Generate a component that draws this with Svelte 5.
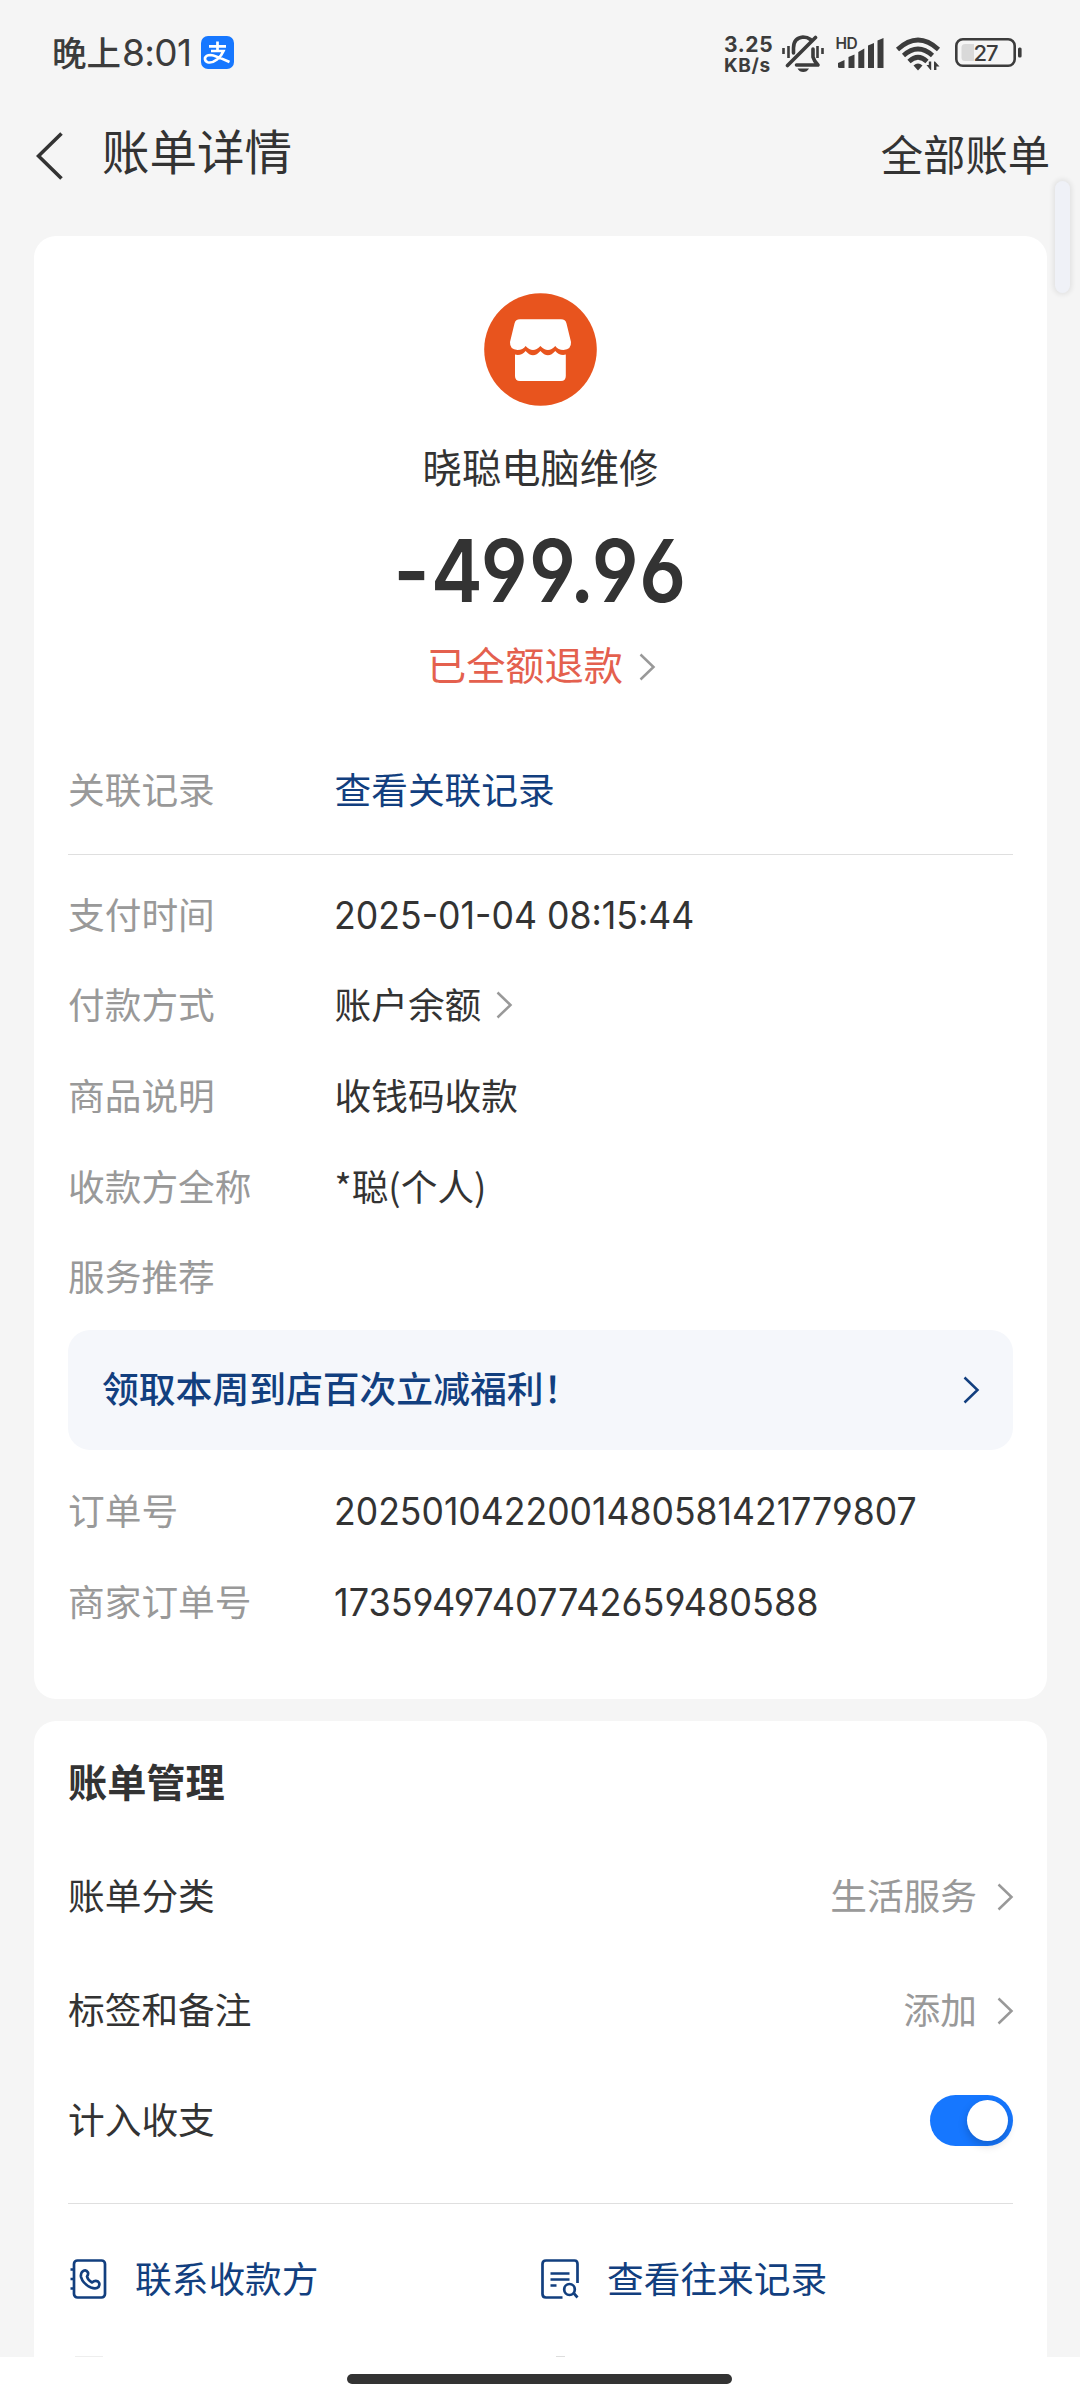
<script>
  const details = [
    { label: '支付时间', value: '2025-01-04 08:15:44', num: 'date' },
    { label: '付款方式', value: '账户余额', arrow: true },
    { label: '商品说明', value: '收钱码收款' },
    { label: '收款方全称', value: '*聪(个人)' },
    { label: '服务推荐', value: '' }
  ];
  const orders = [
    { label: '订单号', value: '2025010422001480581421779807', num: 'order' },
    { label: '商家订单号', value: '17359497407742659480588', num: 'merchant' }
  ];
  const settings = [
    { label: '账单分类', value: '生活服务' },
    { label: '标签和备注', value: '添加' }
  ];
</script>

{#snippet chevron(color)}
  <svg class="chevron {color}" width="17" height="28" viewBox="0 0 17 28">
    <path d="M1.500 1.500 14.500 14 1.500 26.500" />
  </svg>
{/snippet}

{#snippet row(item)}
  <div class="row">
    <span class="label">{item.label}</span>
    <span class="value {item.num ? 'num ' + item.num : ''}">{item.value}</span>
    {#if item.arrow}{@render chevron('gray')}{/if}
  </div>
{/snippet}

<div class="screen">
  <div class="page">
    <header class="status">
      <div class="clock">晚上<span class="digits">8:01</span></div>
      <svg class="pay" width="33" height="33" viewBox="0 0 33 33">
        <rect width="33" height="33" rx="7" fill="#1677ff" />
        <path d="M8 10.300H25M16.500 5.500V15M10 15H22.500Q20.500 20 16 23.500Q11 27.400 6.600 26.200Q3.600 25 4 22Q5 19 9.500 19Q14 19.400 28.500 26" fill="none" stroke="#fff" stroke-width="2.700" />
      </svg>
      <div class="spacer"></div>
      <div class="speed"><span>3.25</span><span>KB/s</span></div>
      <svg class="bell" width="42" height="38" viewBox="0 0 42 38">
        <g fill="none" stroke="#3c3c3c" stroke-width="3.600" stroke-linecap="round" stroke-linejoin="round">
          <path d="M5.500 30.500 33.500 2.500" />
          <path d="M28.500 4.500Q25.500 2 21 2Q11.500 3 11.500 13V18" />
          <path d="M31 14V22Q32 26 36 30H14.500" />
        </g>
        <path d="M1.500 13V19M6.500 11V23M35.500 11V23M40.500 13V19" fill="none" stroke="#3c3c3c" stroke-width="2.600" />
        <path d="M15.500 33.500H27Q25 37 21.200 37Q17.500 37 15.500 33.500Z" fill="#3c3c3c" />
      </svg>
      <svg class="signal" width="52" height="40" viewBox="-2 -6 52 40">
        <text x="-.5" y="13">HD</text>
        <g fill="#3c3c3c">
          <path d="M2 27 8.500 24V32H3.500Q2 32 2 30.500Z" />
          <path d="M12.500 21 18.500 18.500V32H12.500Z" />
          <path d="M22.300 16 28.300 12.500V32H22.300Z" />
          <path d="M32 9.500 38 7V32H32Z" />
          <path d="M41.500 4.500 47.500 2V32H41.500Z" />
        </g>
      </svg>
      <svg class="wifi" width="46" height="36" viewBox="0 0 46 36">
        <g fill="none" stroke="#3c3c3c" stroke-width="4.600">
          <path d="M2.500 13.500Q23 -5.500 43.500 13.500" />
          <path d="M8.500 19.500Q23 6.500 37.500 19.500" />
          <path d="M14 25.500Q23 17 32 25.500" />
        </g>
        <path d="M18.500 29.500Q23 25.500 27.500 29.500L23 34.500Z" fill="#3c3c3c" />
        <path d="M33.800 25.500H36.200V34H35.500L31.500 29H33.800ZM39 34V25.500H40L44.500 30.500H41.400V34Z" fill="#3c3c3c" />
      </svg>
      <svg class="battery" width="68" height="30" viewBox="0 0 68 30">
        <rect x="1.300" y="1.300" width="58.400" height="26.400" rx="6.500" fill="none" stroke="#3c3c3c" stroke-width="2.600" />
        <path d="M10 6H19V23H10Q6.500 23 6.500 19.500V9.500Q6.500 6 10 6Z" fill="#d9d9d9" />
        <rect x="63" y="9.500" width="3.600" height="10" rx="1.500" fill="#3c3c3c" />
        <text x="30.500" y="23" text-anchor="middle">27</text>
      </svg>
    </header>

    <nav class="nav">
      <svg width="28" height="48" viewBox="0 0 28 48">
        <path d="M25.500 1.500 2.500 24 25.500 46.500" fill="none" stroke="#333" stroke-width="3.600" />
      </svg>
      <h1>账单详情</h1>
      <span class="all">全部账单</span>
    </nav>

    <section class="card bill">
      <svg class="shop" width="113" height="113" viewBox="0 0 113 113">
        <circle cx="56.500" cy="56.500" r="56.300" fill="#e8541e" />
        <path fill="#fff" d="M36 26.300H77Q81.500 26.300 82.500 30.500L87 49Q87.500 56.500 79.500 57Q74 57 71.300 53Q64 61 56.400 53Q49 61 41.600 53Q39 57 33.500 57Q25.500 56.500 26 49L30.500 30.500Q31.500 26.300 36 26.300Z" />
        <path fill="#fff" d="M31 61.600Q37.500 63 41.600 58Q49 66.500 56.400 58Q64 66.500 71.300 58Q75.500 63 81.800 61.600V83Q81.800 88 77 88H36Q31 88 31 83Z" />
      </svg>
      <div class="name">晓聪电脑维修</div>
      <div class="amount"><span>-499.96</span></div>
      <div class="refund"><span>已全额退款</span>{@render chevron('gray')}</div>

      <div class="row related">
        <span class="label">关联记录</span>
        <span class="value link">查看关联记录</span>
      </div>
      <div class="divider"></div>
      <div class="rows">
        {#each details as item}{@render row(item)}{/each}
      </div>
      <div class="banner">
        <span>领取本周到店百次立减福利！</span>
        {@render chevron('blue')}
      </div>
      <div class="orders">
        {#each orders as item}{@render row(item)}{/each}
      </div>
    </section>

    <section class="card manage">
      <h2>账单管理</h2>
      {#each settings as item}
        <div class="setting">
          <span>{item.label}</span>
          <span class="hint">{item.value}</span>
          {@render chevron('gray')}
        </div>
      {/each}
      <div class="setting last">
        <span>计入收支</span>
        <div class="toggle"><i></i></div>
      </div>
      <div class="divider"></div>
      <div class="links">
        <div class="action">
          <svg width="38" height="40" viewBox="0 0 38 40">
            <g fill="none" stroke="#123f7f" stroke-width="2.700" stroke-linejoin="round">
              <rect x="4" y="1.500" width="31" height="37" rx="3.500" />
              <path d="M.5 10.500H5M.5 20H5M.5 29.500H5" />
              <path d="M12 13Q15.500 9.500 18 13.500Q18.500 15.500 17 17.500Q18 21.500 22 23.500Q25 21 28 22.500Q30.500 24.500 28.500 28Q26 30.500 21 28.500Q13 25 11 18Q10.500 15 12 13Z" />
            </g>
          </svg>
          <span>联系收款方</span>
        </div>
        <div class="action">
          <svg width="38" height="40" viewBox="0 0 38 40">
            <g fill="none" stroke="#123f7f" stroke-width="2.700">
              <path d="M36.500 24V5Q36.500 1.500 33.500 1.500H5Q1.500 1.500 1.500 5V35Q1.500 38.500 5 38.500H21.500" />
              <path d="M9.500 14.500H28.500M9.500 20.500H28.500M9.500 26.500H15.500M33 34.500 36.500 38.500" />
              <ellipse cx="28.500" cy="30.500" rx="5.300" ry="5.500" />
            </g>
          </svg>
          <span>查看往来记录</span>
        </div>
      </div>
      <div class="peek"><i></i><i></i></div>
    </section>
  </div>
  <div class="home"></div>
  <div class="edge"></div>
</div>

<style>
  :global(body) {
    margin: 0;
    background: #fff;
  }
  .screen {
    position: relative;
    width: 1080px;
    height: 2400px;
    overflow: hidden;
    background: #fff;
    color: #333;
    font-family: 'Noto Sans CJK SC', sans-serif;
    font-size: 36.700px;
  }
  .page {
    height: 2357px;
    overflow: hidden;
    background: #f5f5f5;
  }
  svg {
    display: block;
    flex: none;
  }
  span {
    white-space: nowrap;
  }
  .status {
    display: flex;
    align-items: flex-start;
    height: 104px;
    padding: 0 57px 0 52px;
    color: #3c3c3c;
  }
  .clock {
    display: flex;
    width: 149px;
    height: 104px;
    font-size: 34.500px;
    font-weight: 500;
    line-height: 102px;
  }
  .digits {
    margin-left: 1px;
    font-family: Inter, sans-serif;
    font-size: 37px;
    font-weight: 400;
    line-height: 106px;
    letter-spacing: -0.6px;
  }
  .pay {
    margin-top: 36px;
  }
  .spacer {
    flex: 1;
  }
  .speed {
    display: flex;
    flex-direction: column;
    width: 58px;
    margin-top: 34px;
    font: 700 21px/21px Inter, sans-serif;
  }
  .speed span {
    letter-spacing: 0.6px;
  }
  .speed span:last-child {
    font-size: 19px;
  }
  .bell {
    margin-top: 35px;
  }
  .signal {
    margin: 30px 0 0 10px;
  }
  .signal text {
    font: 600 15.500px Inter, sans-serif;
    letter-spacing: -0.5px;
    fill: #3c3c3c;
  }
  .wifi {
    margin: 36px 0 0 9px;
  }
  .battery {
    margin: 38px 0 0 14px;
  }
  .battery text {
    font: 500 22px Inter, sans-serif;
    letter-spacing: -1px;
    fill: #3c3c3c;
  }
  .nav {
    display: flex;
    align-items: center;
    height: 104px;
    padding: 0 30px 0 36px;
  }
  h1 {
    margin: -12px 0 0 38px;
    font-size: 47.500px;
    font-weight: 400;
    line-height: 60px;
  }
  .all {
    margin: -6px 0 0 auto;
    font-size: 42.300px;
    line-height: 60px;
  }
  .card {
    box-sizing: border-box;
    width: 1013px;
    margin-left: 34px;
    padding: 0 34px;
    border-radius: 22px;
    background: #fff;
  }
  .bill {
    height: 1463px;
    margin-top: 28px;
    padding-top: 57px;
  }
  .shop {
    margin: 0 auto;
  }
  .name {
    margin-top: 30px;
    font-size: 39.300px;
    line-height: 60px;
    text-align: center;
  }
  .amount {
    height: 100px;
    margin-top: 25px;
    font: 600 87px/100px Inter, sans-serif;
    font-feature-settings: 'cv03', 'cv04';
    text-align: center;
  }
  .amount span {
    display: inline-block;
    letter-spacing: 1.500px;
    transform: scaleX(0.893);
  }
  .refund {
    display: flex;
    align-items: center;
    height: 60px;
    margin-top: 12px;
    padding-left: 359px;
    color: #e4604e;
    font-size: 39.200px;
    line-height: 60px;
  }
  .refund .chevron {
    margin: 8px 0 0 16px;
  }
  .chevron path {
    fill: none;
    stroke: #999;
    stroke-width: 2.500;
  }
  .chevron.blue path {
    stroke: #123f7f;
  }
  .row {
    display: flex;
    align-items: center;
    height: 90.700px;
  }
  .label {
    box-sizing: border-box;
    width: 266.500px;
    color: #999;
  }
  .row .chevron {
    margin: 4px 0 0 15px;
  }
  .related {
    margin-top: 50px;
  }
  .link,
  .action {
    color: #123f7f;
  }
  .divider {
    height: 1px;
    margin-top: 20px;
    background: #dfdfdf;
  }
  .rows {
    margin-top: 12.500px;
  }
  .num {
    position: relative;
    top: 2.500px;
    left: -1px;
    font-family: Inter, sans-serif;
    font-size: 38px;
    font-feature-settings: 'cv03', 'cv04';
    transform: scaleX(0.938);
    transform-origin: 0 50%;
  }
  .order {
    transform: scaleX(0.936);
  }
  .merchant {
    transform: scaleX(0.948);
  }
  .banner {
    display: flex;
    align-items: center;
    justify-content: space-between;
    box-sizing: border-box;
    height: 120px;
    margin-top: 9px;
    padding: 0 33px 5px 34px;
    border-radius: 22px;
    background: #f5f7fb;
    color: #123f7f;
    font-size: 36.800px;
    font-weight: 500;
  }
  .banner .chevron {
    margin-top: 5px;
  }
  .orders {
    margin-top: 14px;
  }
  .manage {
    height: 760px;
    margin-top: 22px;
    padding-top: 29px;
  }
  h2 {
    margin: 0;
    font-size: 39.200px;
    font-weight: 700;
    line-height: 60px;
  }
  .setting {
    display: flex;
    align-items: center;
    height: 114px;
  }
  h2 + .setting {
    margin-top: 27px;
  }
  .setting.last {
    height: 106px;
  }
  .hint {
    margin-left: auto;
    color: #999;
  }
  .setting .chevron {
    margin: 5px -1px 0 20px;
  }
  .toggle {
    display: flex;
    align-items: center;
    justify-content: flex-end;
    box-sizing: border-box;
    width: 83px;
    height: 51px;
    margin: 5px 0 0 auto;
    padding: 0 5px;
    border-radius: 26px;
    background: #1677ff;
  }
  .toggle i {
    width: 41px;
    height: 41px;
    border-radius: 50%;
    background: #fff;
    box-shadow: 0 4px 10px rgba(0, 0, 0, 0.2);
  }
  .manage .divider {
    margin-top: 32px;
  }
  .links {
    display: grid;
    grid-template-columns: 471px 1fr;
    height: 80px;
    margin-top: 33px;
  }
  .action {
    display: flex;
    align-items: center;
    gap: 27px;
    padding-left: 2px;
  }
  .action:last-child {
    gap: 28px;
  }
  .action svg {
    margin-top: 3px;
  }
  .peek {
    display: flex;
    gap: 453px;
    margin-top: 39px;
    padding-left: 7px;
  }
  .peek i {
    width: 28px;
    height: 1px;
    background: #eee;
  }
  .peek i:last-child {
    width: 9px;
    background: #ddd;
  }
  .home {
    width: 385px;
    height: 10px;
    margin: 17px 0 0 347px;
    border-radius: 5px;
    background: #333;
  }
  .edge {
    position: absolute;
    top: 181px;
    left: 1055px;
    width: 15px;
    height: 112px;
    border-radius: 8px;
    background: #eff1f7;
    box-shadow: 0 0 5px 2px rgba(0, 0, 0, 0.08);
  }
</style>
